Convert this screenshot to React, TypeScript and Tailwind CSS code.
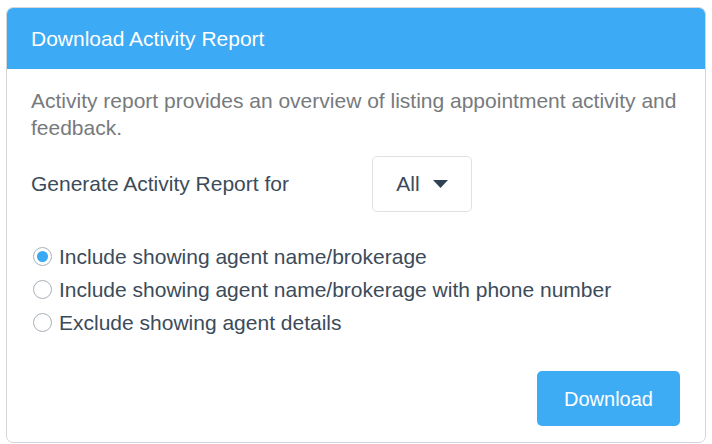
import React from "react";

const font = { fontFamily: '"Liberation Sans", Arial, sans-serif' };

function Radio({ checked }: { checked?: boolean }) {
  return (
    <span className="flex h-[19px] w-[19px] shrink-0 items-center justify-center rounded-full border border-[#a9b0b8] bg-white">
      {checked && <span className="h-[11px] w-[11px] rounded-full bg-[#3aa8f2]" />}
    </span>
  );
}

export default function App() {
  const options = [
    { label: "Include showing agent name/brokerage", checked: true },
    { label: "Include showing agent name/brokerage with phone number" },
    { label: "Exclude showing agent details" },
  ];
  return (
    <div className="h-[444px] w-[712px] bg-white pl-[6px] pt-[7px]" style={font}>
      <div className="flex h-[436px] w-[700px] flex-col overflow-hidden rounded-[7px] border border-[#d3d6da] bg-white">
        <div className="flex h-[61px] shrink-0 items-center bg-[#3caaf4] pl-[24px] text-[21px] text-white">
          Download Activity Report
        </div>
        <div className="flex flex-1 flex-col px-[24px] pt-[18px]">
          <p className="text-[21px] leading-[27px] text-[#777a7d]">
            Activity report provides an overview of listing appointment activity and feedback.
          </p>
          <div className="mt-[15px] flex items-center">
            <span className="w-[341px] text-[21px] text-[#3c4b5a]">Generate Activity Report for</span>
            <div className="flex h-[56px] w-[100px] items-center justify-center gap-[13px] rounded-[5px] border border-[#dfe2e5] bg-white text-[21px] text-[#3c4b5a]">
              <span>All</span>
              <svg width="15" height="8" viewBox="0 0 15 8">
                <path d="M0 0 H15 L7.5 8 Z" fill="#2f4254" />
              </svg>
            </div>
          </div>
          <div className="mt-[28px] flex flex-col">
            {options.map((o) => (
              <label key={o.label} className="flex h-[33px] items-center gap-[7px] pl-[2px] text-[21px] text-[#3c4b5a]">
                <Radio checked={o.checked} />
                <span>{o.label}</span>
              </label>
            ))}
          </div>
          <div className="mt-auto flex justify-end pb-[16px] pr-[1px]">
            <button className="h-[55px] w-[143px] rounded-[5px] bg-[#3eacf5] text-[20px] text-white">
              Download
            </button>
          </div>
        </div>
      </div>
    </div>
  );
}
